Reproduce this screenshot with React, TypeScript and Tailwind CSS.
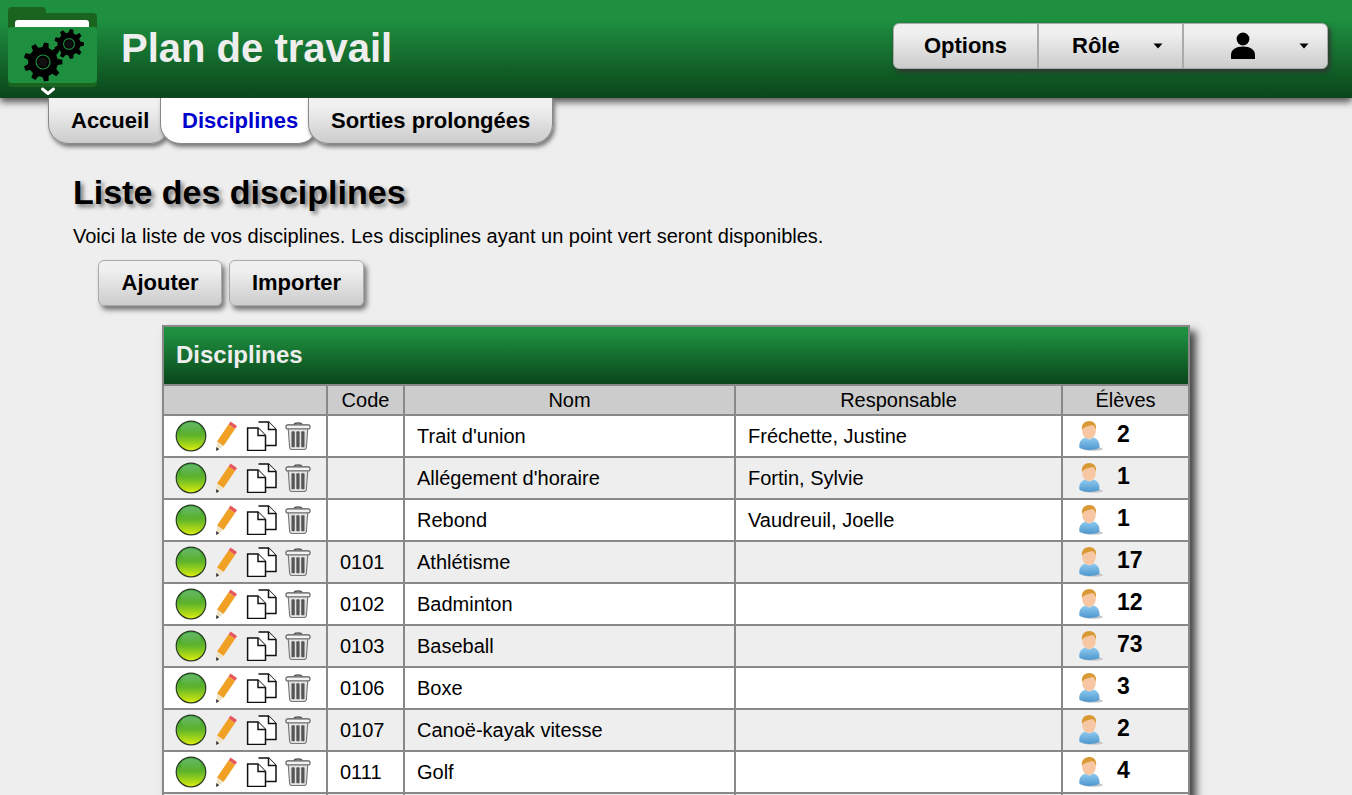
const FONT = "font-['Liberation_Sans',Arial,sans-serif]"

interface Discipline {
    code: string
    nom: string
    responsable: string
    eleves: number
}

const disciplines: Discipline[] = [
    { code: "", nom: "Trait d'union", responsable: "Fréchette, Justine", eleves: 2 },
    { code: "", nom: "Allégement d'horaire", responsable: "Fortin, Sylvie", eleves: 1 },
    { code: "", nom: "Rebond", responsable: "Vaudreuil, Joelle", eleves: 1 },
    { code: "0101", nom: "Athlétisme", responsable: "", eleves: 17 },
    { code: "0102", nom: "Badminton", responsable: "", eleves: 12 },
    { code: "0103", nom: "Baseball", responsable: "", eleves: 73 },
    { code: "0106", nom: "Boxe", responsable: "", eleves: 3 },
    { code: "0107", nom: "Canoë-kayak vitesse", responsable: "", eleves: 2 },
    { code: "0111", nom: "Golf", responsable: "", eleves: 4 },
]

const gearPath = (cx: number, cy: number, outer: number, inner: number, teeth: number) => {
    const points: string[] = []
    const step = (Math.PI * 2) / teeth
    for (let i = 0; i < teeth; i++) {
        const a = i * step
        const corners: [number, number][] = [
            [inner, a - step * 0.3],
            [outer, a - step * 0.17],
            [outer, a + step * 0.17],
            [inner, a + step * 0.3],
        ]
        corners.forEach(([r, t]) => {
            points.push(`${(cx + r * Math.cos(t)).toFixed(2)} ${(cy + r * Math.sin(t)).toFixed(2)}`)
        })
    }
    return `M${points.join("L")}Z`
}

const Logo = () => (
    <svg width="90" height="92" viewBox="0 0 90 92" className="mt-[6px] shrink-0">
        <path d="M0 5a4 4 0 0 1 4-4h30a4 4 0 0 1 4 4v2h47a4 4 0 0 1 4 4v66a4 4 0 0 1-4 4H4a4 4 0 0 1-4-4z" fill="#1a641f" />
        <rect x="7" y="14" width="74" height="14" rx="3" fill="#ffffff" />
        <path d="M0 24a3 3 0 0 1 3-3h83a3 3 0 0 1 3 3v49a4 4 0 0 1-4 4H4a4 4 0 0 1-4-4z" fill="#1e8f3f" />
        <path d={gearPath(35, 56, 19.5, 15, 9)} fill="#000000" />
        <circle cx="35" cy="56" r="7" fill="none" stroke="#1e8f3f" strokeWidth="1.2" />
        <circle cx="35" cy="56" r="4.600" fill="#101010" />
        <path d={gearPath(61, 38, 15, 11.500, 9)} fill="#000000" />
        <circle cx="61" cy="38" r="5.400" fill="none" stroke="#1e8f3f" strokeWidth="1.2" />
        <circle cx="61" cy="38" r="3.400" fill="#101010" />
        <path d="M34.500 83l5.500 4.500 5.500-4.500" fill="none" stroke="#ffffff" strokeWidth="3" strokeLinecap="round" strokeLinejoin="round" />
    </svg>
)

const Caret = () => (
    <svg width="10" height="6" viewBox="0 0 10 6">
        <path d="M0.500 0.500h9L5 5.500z" fill="#000000" />
    </svg>
)

const UserGlyph = () => (
    <svg width="26" height="28" viewBox="0 0 26 28">
        <circle cx="13" cy="7" r="6.400" fill="#000000" />
        <path d="M1 27v-4c0-5.500 5-8.500 12-8.500s12 3 12 8.500v4z" fill="#000000" />
    </svg>
)

const Ball = ({ id }: { id: number }) => (
    <svg width="32" height="32" viewBox="0 0 32 32" className="shrink-0">
        <defs>
            <linearGradient id={`ball-${id}`} x1="0" y1="0" x2="0" y2="1">
                <stop offset="0" stopColor="#2f9e3a" />
                <stop offset="0.5" stopColor="#62b52a" />
                <stop offset="0.85" stopColor="#b4dc14" />
                <stop offset="1" stopColor="#e4f210" />
            </linearGradient>
            <linearGradient id={`shine-${id}`} x1="0" y1="0" x2="0" y2="1">
                <stop offset="0" stopColor="#ffffff" stopOpacity="0.25" />
                <stop offset="1" stopColor="#ffffff" stopOpacity="0" />
            </linearGradient>
        </defs>
        <circle cx="16" cy="16" r="14.800" fill={`url(#ball-${id})`} stroke="#2a3a22" strokeWidth="1.200" />
        <ellipse cx="16" cy="8.500" rx="10" ry="6" fill={`url(#shine-${id})`} />
    </svg>
)

const Pencil = () => (
    <svg width="28" height="32" viewBox="0 0 28 32" className="shrink-0">
        <path d="M18.500 1.500l6.500 4.500-2 3-6.500-4.500z" fill="#e8595c" />
        <path d="M16.500 4.500l6.500 4.500L11.500 26 5 21.500z" fill="#f0a024" />
        <path d="M5 21.500l6.500 4.500-7 5z" fill="#efe3c6" />
        <path d="M4.200 27l3 2.200-3 1.800z" fill="#333333" />
    </svg>
)

const Copy = () => (
    <svg width="32" height="30" viewBox="0 0 32 30" className="shrink-0" fill="#ffffff" stroke="#111111" strokeWidth="1.500">
        <path d="M12.500 1h10l7.500 7.500V24.500H20" />
        <path d="M22.500 1v7.500H30" />
        <path d="M1.600 7h10.400l7.500 7.500v14.900H1.600z" />
        <path d="M12 7v7.500h7.500" />
    </svg>
)

const Trash = () => (
    <svg width="26" height="30" viewBox="0 0 28 32" className="shrink-0">
        <path d="M10 3.500c0-2 8-2 8 0" fill="none" stroke="#555555" strokeWidth="1.500" />
        <rect x="1" y="4" width="26" height="4.500" rx="2" fill="#f2f2f2" stroke="#555555" strokeWidth="1.200" />
        <path d="M3.500 8.500h21l-1.500 20a2.500 2.500 0 0 1-2.500 2h-13a2.500 2.500 0 0 1-2.500-2z" fill="#e2e2e2" stroke="#777777" strokeWidth="1.200" />
        <rect x="7" y="11" width="3.500" height="17" rx="1" fill="#555555" />
        <rect x="12.200" y="11" width="3.500" height="17" rx="1" fill="#555555" />
        <rect x="17.500" y="11" width="3.500" height="17" rx="1" fill="#555555" />
    </svg>
)

const Student = ({ id }: { id: number }) => (
    <svg width="26" height="30" viewBox="0 0 26 30" className="shrink-0">
        <defs>
            <linearGradient id={`shirt-${id}`} x1="0" y1="0" x2="0" y2="1">
                <stop offset="0" stopColor="#8ecbef" />
                <stop offset="1" stopColor="#4f97cf" />
            </linearGradient>
        </defs>
        <ellipse cx="15" cy="28" rx="10" ry="1.800" fill="#c8c8c8" />
        <path d="M1.500 27c-1-6 2-9.500 6-10.500l4 2 4-2c4 1 6.500 4.500 6 10.500-5 2.500-15 2.500-20 0z" fill={`url(#shirt-${id})`} />
        <ellipse cx="11" cy="10" rx="6.800" ry="8" fill="#f7c6a3" />
        <path d="M4 9c-1-6 3-9 7.500-9 4.500 0 7.500 3.500 6.500 9-1-3-2-4.500-4-5-3 1.500-7.500 1-10 5z" fill="#d99a35" />
    </svg>
)

const App = () => {
    return (
        <div className={`h-screen overflow-hidden bg-[#eeeeee] text-black ${FONT}`}>
            <header className="relative flex h-[98px] items-start bg-gradient-to-b from-[#1e9040] from-20% to-[#0a461a] pl-2 pr-6 shadow-[0_4px_7px_#555555]">
                <Logo />
                <h1 className="ml-[23px] mt-[23px] text-[40px] leading-[50px] font-bold text-[#eeeeee]">Plan de travail</h1>
                <nav className="ml-auto mt-[23px] flex h-[46px] w-[435px] rounded-md border border-[#aaaaaa] bg-gradient-to-b from-[#f0f0f0] from-20% to-[#cccccc] text-[22px] font-bold shadow-[2px_3px_5px_#333333]">
                    <div className="flex w-[143px] items-center justify-center pb-[2px]">Options</div>
                    <div className="flex w-[145px] items-center border-l-2 border-[#aaaaaa] pl-[33px]">
                        <span className="w-[81px] pb-[2px]">Rôle</span>
                        <Caret />
                    </div>
                    <div className="flex flex-1 items-center border-l-2 border-[#aaaaaa] pl-[46px]">
                        <span className="w-[69px]"><UserGlyph /></span>
                        <Caret />
                    </div>
                </nav>
            </header>

            <div className="relative flex pl-12 text-[22px] font-bold">
                <div className="relative h-[46px] w-[122px] rounded-b-[20px] border border-t-0 border-[#888888] bg-gradient-to-b from-[#f0f0f0] from-20% to-[#cccccc] pl-[22px] pt-[6px] shadow-[2px_3px_4px_#777777]">Accueil</div>
                <div className="relative -ml-[10px] h-[46px] w-[158px] rounded-b-[20px] border border-t-0 border-[#888888] bg-white pl-[21px] pt-[6px] text-[#0000cc] shadow-[2px_3px_4px_#777777]">Disciplines</div>
                <div className="relative -ml-[10px] h-[46px] w-[245px] rounded-b-[20px] border border-t-0 border-[#888888] bg-gradient-to-b from-[#f0f0f0] from-20% to-[#cccccc] pl-[22px] pt-[6px] shadow-[2px_3px_4px_#777777]">Sorties prolongées</div>
            </div>

            <main className="pl-[73px]">
                <h2 className="mt-[26px] text-[34px] leading-[44px] font-bold [text-shadow:3px_3px_4px_#777777]">Liste des disciplines</h2>
                <p className="mt-[8px] text-[20px] leading-[28px]">Voici la liste de vos disciplines. Les disciplines ayant un point vert seront disponibles.</p>
                <div className="ml-[25px] mt-[10px] flex gap-[7px] text-[22px] font-bold">
                    <button className="h-[46px] w-[124px] rounded-md border border-[#aaaaaa] bg-gradient-to-b from-[#f0f0f0] from-20% to-[#cccccc] pb-[2px] shadow-[3px_4px_5px_#777777]">Ajouter</button>
                    <button className="h-[46px] w-[135px] rounded-md border border-[#aaaaaa] bg-gradient-to-b from-[#f0f0f0] from-20% to-[#cccccc] pb-[2px] shadow-[3px_4px_5px_#777777]">Importer</button>
                </div>

                <section className="ml-[89px] mt-[19px] w-[1028px] border-2 border-[#888888] shadow-[6px_6px_8px_#444444]">
                    <div className="flex h-[57px] items-center bg-gradient-to-b from-[#1e9040] from-10% to-[#0a461a] pb-[2px] pl-[12px] text-[24px] font-bold text-[#eeeeee]">Disciplines</div>
                    <table className="w-full table-fixed border-collapse text-[20px]">
                        <colgroup>
                            <col className="w-[163px]" />
                            <col className="w-[77px]" />
                            <col className="w-[331px]" />
                            <col className="w-[327px]" />
                            <col />
                        </colgroup>
                        <thead>
                            <tr className="h-[28px] bg-[#cccccc] leading-[28px]">
                                <th className="border-2 border-l-0 border-[#888888] p-0 font-normal"></th>
                                <th className="border-2 border-[#888888] p-0 font-normal">Code</th>
                                <th className="border-2 border-[#888888] p-0 font-normal">Nom</th>
                                <th className="border-2 border-[#888888] p-0 font-normal">Responsable</th>
                                <th className="border-2 border-r-0 border-[#888888] p-0 font-normal">Élèves</th>
                            </tr>
                        </thead>
                        <tbody>
                            {disciplines.map((d, i) => (
                                <tr key={d.nom} className={`h-[42px] ${i % 2 === 0 ? "bg-white" : "bg-[#eeeeee]"}`}>
                                    <td className="border-2 border-l-0 border-[#888888] p-0">
                                        <div className="flex items-center pl-[11px]">
                                            <Ball id={i} />
                                            <span className="ml-[5px]"><Pencil /></span>
                                            <span className="ml-[6px]"><Copy /></span>
                                            <span className="ml-[7px]"><Trash /></span>
                                        </div>
                                    </td>
                                    <td className="border-2 border-[#888888] pl-[12px]">{d.code}</td>
                                    <td className="border-2 border-[#888888] pl-[12px]">{d.nom}</td>
                                    <td className="border-2 border-[#888888] pl-[12px]">{d.responsable}</td>
                                    <td className="border-2 border-r-0 border-[#888888] p-0">
                                        <div className="flex items-center pl-[15px]">
                                            <Student id={i} />
                                            <span className="ml-[13px] -mt-[4px] text-[23px] font-bold">{d.eleves}</span>
                                        </div>
                                    </td>
                                </tr>
                            ))}
                            <tr className="h-[42px] bg-[#eeeeee]">
                                <td className="border-2 border-l-0 border-[#888888]"></td>
                                <td className="border-2 border-[#888888]"></td>
                                <td className="border-2 border-[#888888]"></td>
                                <td className="border-2 border-[#888888]"></td>
                                <td className="border-2 border-r-0 border-[#888888]"></td>
                            </tr>
                        </tbody>
                    </table>
                </section>
            </main>
        </div>
    )
}

export default App
